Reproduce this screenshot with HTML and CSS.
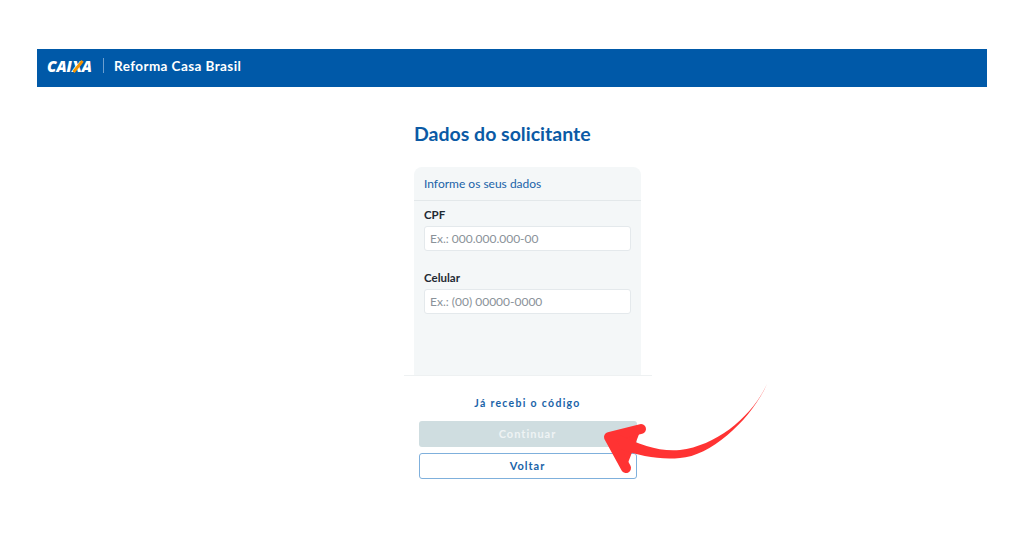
FILE: index.html
```html
<!DOCTYPE html>
<html lang="pt-BR">
<head>
  <meta charset="UTF-8" />
  <meta name="viewport" content="width=device-width, initial-scale=1.0"/>
  <title>Reforma Casa Brasil</title>
  <link rel="stylesheet" href="styles.css">
</head>
<body>
  <header class="topbar">
    <div class="logo">
      <span>CAI</span><span class="logo-x">X<svg viewBox="0 0 13 13" width="13" height="13"><path d="M11.5 1 L2.5 12" stroke="#f39200" stroke-width="2.8"/></svg></span><span>A</span>
    </div>
    <div class="topbar-sep"></div>
    <div class="topbar-title">Reforma Casa Brasil</div>
  </header>

  <main class="content">
    <h1>Dados do solicitante</h1>
    <form class="card">
      <div class="card-head">Informe os seus dados</div>
      <div class="card-body">
        <label for="cpf">CPF</label>
        <input type="text" id="cpf" placeholder="Ex.: 000.000.000-00" />
        <label for="celular" class="second">Celular</label>
        <input type="text" id="celular" placeholder="Ex.: (00) 00000-0000" />
      </div>
    </form>
    <div class="actions">
      <a class="code-link" href="#">Já recebi o código</a>
      <button type="button" class="btn btn-disabled">Continuar</button>
      <button type="button" class="btn btn-outline">Voltar</button>
    </div>
  </main>

  <svg class="arrow" viewBox="0 0 1024 536" width="1024" height="536">
    <path class="arrow-head" d="M641 429 L609 437 L626 468"/>
    <path class="arrow-shaft" d="M767 384 C752 416 718 445 680 450 C660 452 640 445 620 435 L620 449 C640 456 660 460 680 458 C712 456 752 418 767 384 Z"/>
  </svg>
</body>
</html>
```

FILE: styles.css
```css
* {
  box-sizing: border-box;
}

html, body {
  margin: 0;
  height: 536px;
  overflow: hidden;
}

body {
  font-family: 'Lato', sans-serif;
  background: #fff;
  padding-top: 49px;
}

.topbar {
  display: flex;
  align-items: center;
  height: 38px;
  margin: 0 37px;
  padding: 0 0 5px 10px;
  background: #0059a8;
  color: #fff;
}

.logo {
  display: flex;
  width: 46px;
  font-family: 'Open Sans', sans-serif;
  font-size: 15px;
  font-weight: 800;
  font-style: italic;
}

.logo-x {
  position: relative;
}

.logo-x svg {
  position: absolute;
  left: -1px;
  top: 4px;
}

.topbar-sep {
  width: 1px;
  height: 15px;
  margin: 0 10px;
  background: #6d9fcf;
}

.topbar-title {
  font-size: 13.5px;
  font-weight: 700;
  letter-spacing: 0.42px;
}

.content {
  display: flex;
  flex-direction: column;
  align-items: center;
  padding-left: 31px;
}

h1 {
  width: 227px;
  margin: 34px 0 21px;
  color: #0b5aa5;
  font-size: 19.5px;
  line-height: 25px;
  font-weight: 700;
}

.card {
  width: 227px;
  height: 208px;
  background: #f4f7f8;
  border-radius: 8px 8px 0 0;
}

.card-head {
  height: 34px;
  padding: 9px 10px 0;
  color: #1a63a8;
  font-size: 12px;
  border-bottom: 1px solid #e3e8ea;
}

.card-body {
  padding: 7px 10px;
}

label {
  display: block;
  margin-bottom: 4px;
  color: #1f2a33;
  font-size: 11.5px;
  line-height: 14px;
  font-weight: 700;
}

label.second {
  margin-top: 20px;
}

input {
  display: block;
  width: 100%;
  height: 25px;
  padding: 0 5px;
  border: 1px solid #e4e9ec;
  border-radius: 3px;
  background: #fff;
  font-family: inherit;
  font-size: 12px;
}

input::placeholder {
  color: #8a9299;
}

.actions {
  display: flex;
  flex-direction: column;
  align-items: center;
  width: 248px;
  border-top: 1px solid #eef1f2;
}

.code-link {
  margin: 20px 0 11px;
  color: #1a63a8;
  font-size: 10.5px;
  line-height: 14px;
  font-weight: 700;
  letter-spacing: 1.3px;
  text-decoration: none;
}

.btn {
  width: 218px;
  height: 26px;
  margin-bottom: 6px;
  padding: 0 0 2px;
  border-radius: 3px;
  font-family: inherit;
  font-size: 11px;
  font-weight: 700;
  letter-spacing: 1px;
}

.btn-disabled {
  border: none;
  background: #cfdde0;
  color: #eef3f4;
}

.btn-outline {
  border: 1px solid #7fb0dc;
  background: #fff;
  color: #1a63a8;
}

.arrow {
  position: absolute;
  left: 0;
  top: 0;
  pointer-events: none;
}

.arrow-head {
  fill: #ff3333;
  stroke: #ff3333;
  stroke-width: 10;
  stroke-linecap: round;
  stroke-linejoin: round;
}

.arrow-shaft {
  fill: #ff3333;
}
```
